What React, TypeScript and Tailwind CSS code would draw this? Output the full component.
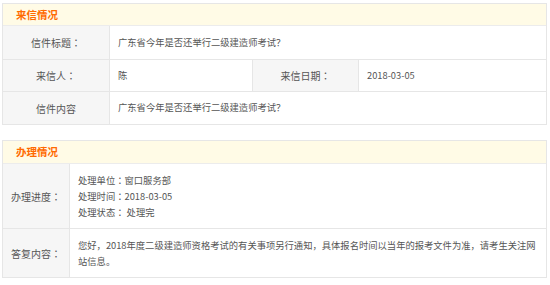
import React from "react";

const font = { fontFamily: '"Noto Sans CJK SC", "Noto Sans", sans-serif' };
const tc = { fontFamily: '"Noto Sans CJK TC", "Noto Sans CJK SC", sans-serif' };

function C() {
  return <span style={tc}>：</span>;
}

export default function App() {
  return (
    <div className="w-[550px] h-[285px] bg-white pt-[3px] pl-[2px] [text-spacing-trim:space-all]" style={font}>
      {/* Panel 1 */}
      <div className="w-[545px] border border-[#e6e6e6]">
        <div className="h-[22px] bg-[#fffbe6] border-b border-[#ececec] pl-[13px] flex items-center text-[10.5px] font-bold text-[#ff6a00]">
          来信情况
        </div>
        <div className="grid grid-cols-[106px_1fr] h-[33px] text-[#555]">
          <div className="bg-[#f6f6f6] flex items-center justify-center text-[10px]">信件标题<C /></div>
          <div className="border-l border-[#e6e6e6] flex items-center pl-[8px] text-[9.3px]">广东省今年是否还举行二级建造师考试？</div>
        </div>
        <div className="grid grid-cols-[106px_143px_106px_1fr] h-[32px] border-t border-[#e6e6e6] text-[#555]">
          <div className="bg-[#f6f6f6] flex items-center justify-center text-[10px]">来信人<C /></div>
          <div className="border-l border-[#e6e6e6] flex items-center pl-[8px] text-[9.3px]">陈</div>
          <div className="border-l border-[#e6e6e6] bg-[#f6f6f6] flex items-center justify-center text-[10px]">来信日期<C /></div>
          <div className="border-l border-[#e6e6e6] flex items-center pl-[8px] text-[9.3px]">2018-03-05</div>
        </div>
        <div className="grid grid-cols-[106px_1fr] h-[33px] border-t border-[#e6e6e6] text-[#555]">
          <div className="bg-[#f6f6f6] flex items-center justify-center text-[10px]">信件内容</div>
          <div className="border-l border-[#e6e6e6] flex items-center pl-[8px] text-[9.3px]">广东省今年是否还举行二级建造师考试？</div>
        </div>
      </div>

      {/* Panel 2 */}
      <div className="w-[545px] mt-[15px] border border-[#e6e6e6]">
        <div className="h-[23px] bg-[#fffbe6] border-b border-[#ececec] pl-[13px] flex items-center text-[10.5px] font-bold text-[#ff6a00]">
          办理情况
        </div>
        <div className="grid grid-cols-[66px_1fr] h-[64px] text-[#555]">
          <div className="bg-[#f6f6f6] flex items-center justify-center text-[10px]">办理进度<C /></div>
          <div className="border-l border-[#e6e6e6] flex flex-col justify-center pl-[8px] text-[9.3px] leading-[16px]">
            <div>处理单位<C />窗口服务部</div>
            <div>处理时间<C />2018-03-05</div>
            <div>处理状态<C /> 处理完</div>
          </div>
        </div>
        <div className="grid grid-cols-[66px_1fr] h-[49px] border-t border-[#e6e6e6] text-[#555]">
          <div className="bg-[#f6f6f6] flex items-center justify-center text-[10px]">答复内容<C /></div>
          <div className="border-l border-[#e6e6e6] flex flex-col justify-center pl-[8px] pr-[6px] text-[9.3px] leading-[16px]">
            <div>
              您好，2018年度二级建造师资格考试的有关事项另行通知，具体报名时间以当年的报考文件为准，请考生关注网站信息。
            </div>
          </div>
        </div>
      </div>
    </div>
  );
}
